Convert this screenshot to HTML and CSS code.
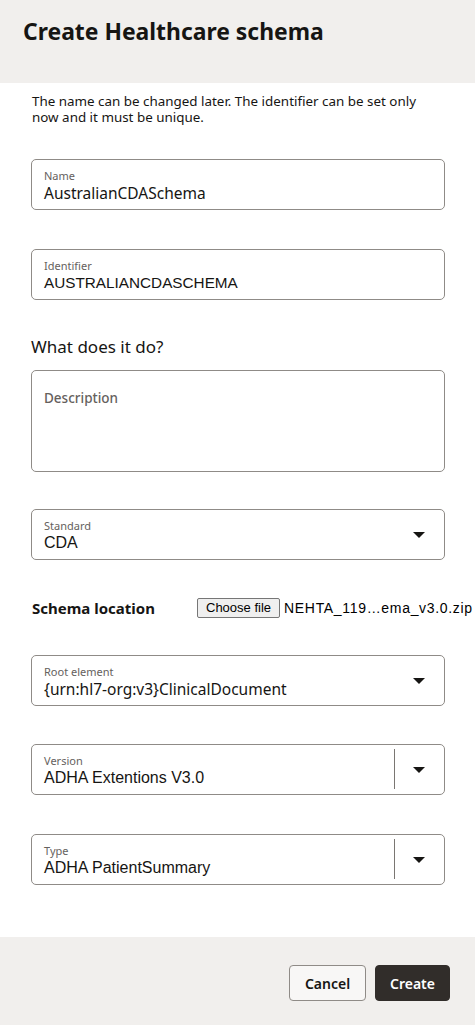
FILE: index.html
```html
<!DOCTYPE html>
<html>
<head>
<meta charset="utf-8">
<link rel="stylesheet" href="styles.css">
</head>
<body>
<div class="dialog">
  <header class="head">
    <h1 class="title">Create Healthcare schema</h1>
  </header>
  <main class="body">
    <p class="intro">The name can be changed later. The identifier can be set only now and it must be unique.</p>

    <div class="field f-name">
      <div class="field-main">
        <span class="label">Name</span>
        <span class="value">AustralianCDASchema</span>
      </div>
    </div>

    <div class="field f-ident">
      <div class="field-main">
        <span class="label">Identifier</span>
        <span class="value arial caps">AUSTRALIANCDASCHEMA</span>
      </div>
    </div>

    <h2 class="section">What does it do?</h2>

    <div class="textarea">
      <span class="placeholder">Description</span>
    </div>

    <div class="field f-standard">
      <div class="field-main">
        <span class="label">Standard</span>
        <span class="value arial">CDA</span>
      </div>
      <span class="caret"></span>
    </div>

    <div class="file-row">
      <span class="file-label">Schema location</span>
      <span class="file-input"><span class="file-btn">Choose file</span><span class="file-name">NEHTA_119…ema_v3.0.zip</span></span>
    </div>

    <div class="field f-root">
      <div class="field-main">
        <span class="label">Root element</span>
        <span class="value">{urn:hl7-org:v3}ClinicalDocument</span>
      </div>
      <span class="caret"></span>
    </div>

    <div class="field f-version">
      <div class="field-main">
        <span class="label">Version</span>
        <span class="value arial">ADHA Extentions V3.0</span>
      </div>
      <span class="divider"></span>
      <span class="caret split"></span>
    </div>

    <div class="field f-type">
      <div class="field-main">
        <span class="label">Type</span>
        <span class="value arial">ADHA PatientSummary</span>
      </div>
      <span class="divider"></span>
      <span class="caret split"></span>
    </div>
  </main>
  <footer class="foot">
    <button class="btn btn-cancel">Cancel</button>
    <button class="btn btn-create">Create</button>
  </footer>
</div>
</body>
</html>
```

FILE: styles.css
```css
* { box-sizing: border-box; }
html, body { margin: 0; padding: 0; background: #ffffff; }
body {
  font-family: "Noto Sans", "Open Sans", sans-serif;
  color: #161513;
  width: 475px;
  overflow: hidden;
}
.dialog { display: flex; flex-direction: column; min-height: 1025px; }

.head {
  background: #f1efed;
  height: 83px;
  padding: 16px 23px 0;
}
.title {
  margin: 0;
  font-size: 22.9px;
  font-weight: 700;
  line-height: 32px;
  color: #161513;
}

.body {
  flex: 1;
  padding: 10px 30px 0 31px;
}
.intro {
  margin: 0 0 0 1px;
  font-size: 13.4px;
  line-height: 16px;
  color: #161513;
  padding-right: 4px;
}

.field {
  display: flex;
  align-items: stretch;
  height: 51px;
  border: 1px solid #8f8b87;
  border-radius: 5px;
  background: #fff;
}
.field-main {
  flex: 1;
  display: flex;
  flex-direction: column;
  padding: 9px 12px 0;
  min-width: 0;
}
.label {
  font-size: 11px;
  line-height: 14px;
  color: #65615d;
}
.value {
  font-size: 15.5px;
  line-height: 20px;
  color: #161513;
  white-space: nowrap;
}
.value.arial { font-family: "Liberation Sans", Arial, sans-serif; font-size: 16px; }
.value.arial.caps { font-size: 15.3px; }

.f-name { margin-top: 34px; }
.f-ident { margin-top: 39px; }

.section {
  margin: 36px 0 0 0;
  font-size: 17px;
  font-weight: 400;
  line-height: 22px;
  color: #161513;
}
.textarea {
  margin-top: 12px;
  height: 102px;
  border: 1px solid #8f8b87;
  border-radius: 5px;
  padding: 15px 12px 0;
}
.placeholder {
  font-size: 13.5px;
  line-height: 18px;
  color: #65615d;
  font-weight: 500;
}

.f-standard { margin-top: 37px; }

.caret {
  width: 50px;
  position: relative;
  flex: none;
}
.caret::after {
  content: "";
  position: absolute;
  left: 19px;
  top: 22px;
  border-left: 6px solid transparent;
  border-right: 6px solid transparent;
  border-top: 6px solid #161513;
}
.caret.split { width: 49px; }
.caret.split::after { left: 18px; }
.divider {
  width: 1px;
  background: #7a7672;
  margin: 4px 0 5px;
  flex: none;
}

.file-row {
  display: flex;
  align-items: center;
  margin-top: 38px;
  height: 20px;
  margin-right: -30px;
}
.file-label {
  width: 166px;
  flex: none;
  font-size: 15px;
  font-weight: 700;
  padding-left: 1px;
}
.file-input {
  display: flex;
  align-items: center;
  font-family: "Liberation Sans", Arial, sans-serif;
  font-size: 13.3px;
  color: #000;
  white-space: nowrap;
}
.file-btn {
  display: inline-block;
  height: 20px;
  line-height: 18px;
  padding: 0 8px;
  border: 1px solid #767676;
  border-radius: 2px;
  background: #efefef;
  margin-right: 4px;
  font-size: 13px;
}
.file-name { white-space: nowrap; font-size: 14px; letter-spacing: 0.68px; }

.f-root { margin-top: 37px; }
.f-version { margin-top: 38px; }
.f-type { margin-top: 39px; }

.foot {
  background: #f1efed;
  height: 88px;
  margin-top: 44px;
  display: flex;
  justify-content: flex-end;
  align-items: flex-start;
  gap: 9px;
  padding: 28px 25px 0 0;
}
.btn {
  height: 36px;
  border-radius: 4px;
  font-family: "Noto Sans", "Open Sans", sans-serif;
  font-size: 14px;
  font-weight: 600;
  padding: 0;
  cursor: pointer;
}
.btn-cancel {
  width: 77px;
  border: 1px solid #8f8b87;
  color: #161513;
  background: #f8f7f6;
}
.btn-create {
  width: 75px;
  background: #312d2a;
  border: 1px solid #312d2a;
  color: #fff;
}
```
